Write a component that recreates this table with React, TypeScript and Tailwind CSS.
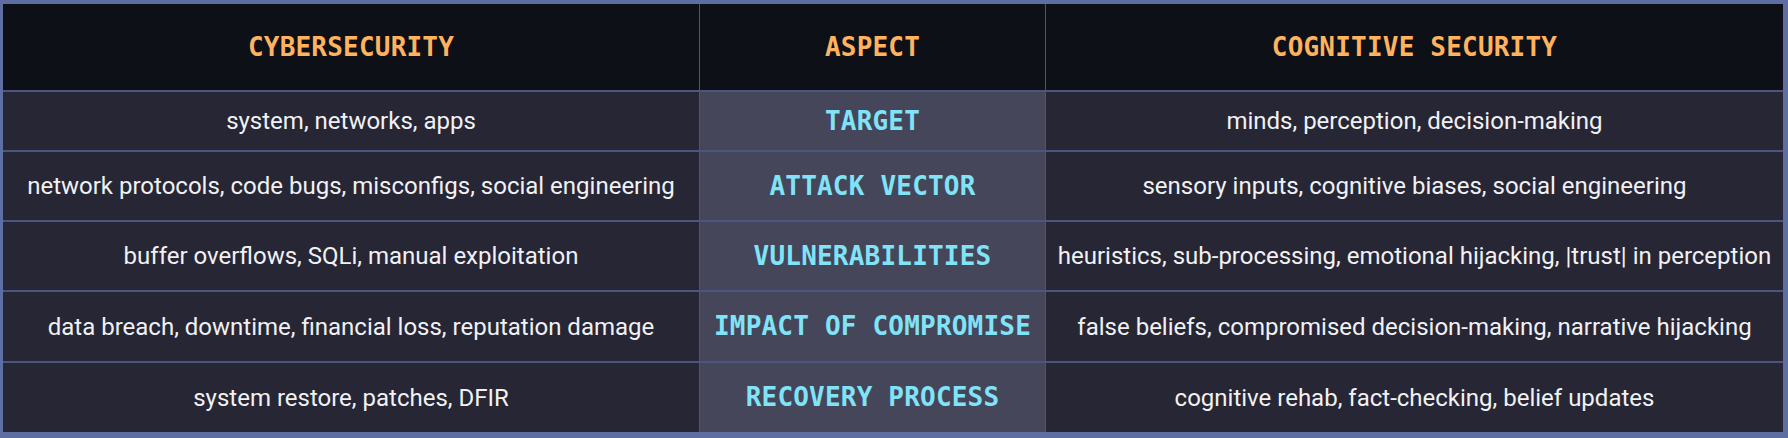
const rows = [
  ["system, networks, apps", "TARGET", "minds, perception, decision-making"],
  ["network protocols, code bugs, misconfigs, social engineering", "ATTACK VECTOR", "sensory inputs, cognitive biases, social engineering"],
  ["buffer overflows, SQLi, manual exploitation", "VULNERABILITIES", "heuristics, sub-processing, emotional hijacking, |trust| in perception"],
  ["data breach, downtime, financial loss, reputation damage", "IMPACT OF COMPROMISE", "false beliefs, compromised decision-making, narrative hijacking"],
  ["system restore, patches, DFIR", "RECOVERY PROCESS", "cognitive rehab, fact-checking, belief updates"],
];

const mono = "font-['DejaVu_Sans_Mono',monospace] font-bold text-[26px] tracking-[0.2px]";
const body = "font-['Roboto',sans-serif] text-[24px] text-[#f1f1f4]";

export default function App() {
  return (
    <div className="w-[1788px] h-[438px] bg-[#5e6ea3] border-l-[3px] border-t-4 border-r-[5px] border-b-[6px] border-[#5e6ea3]">
      <div className="grid grid-cols-[696px_345px_737px] grid-rows-[86px_58px_68px_68px_69px_69px] gap-x-px gap-y-[2px] bg-[#4a5580] h-full">
        <div className={`bg-[#0d1016] flex items-center justify-center text-[#ffb35f] ${mono}`}>CYBERSECURITY</div>
        <div className={`bg-[#0d1016] flex items-center justify-center text-[#ffb35f] ${mono}`}>ASPECT</div>
        <div className={`bg-[#0d1016] flex items-center justify-center text-[#ffb35f] ${mono}`}>COGNITIVE SECURITY</div>
        {rows.map(([cyber, aspect, cog]) => (
          <>
            <div key={aspect + "a"} className={`bg-[#262634] flex items-center justify-center whitespace-nowrap ${body}`}>{cyber}</div>
            <div key={aspect + "b"} className={`bg-[#45465a] flex items-center justify-center text-[#80e3f7] ${mono}`}>{aspect}</div>
            <div key={aspect + "c"} className={`bg-[#262634] flex items-center justify-center whitespace-nowrap ${body}`}>{cog}</div>
          </>
        ))}
      </div>
    </div>
  );
}
